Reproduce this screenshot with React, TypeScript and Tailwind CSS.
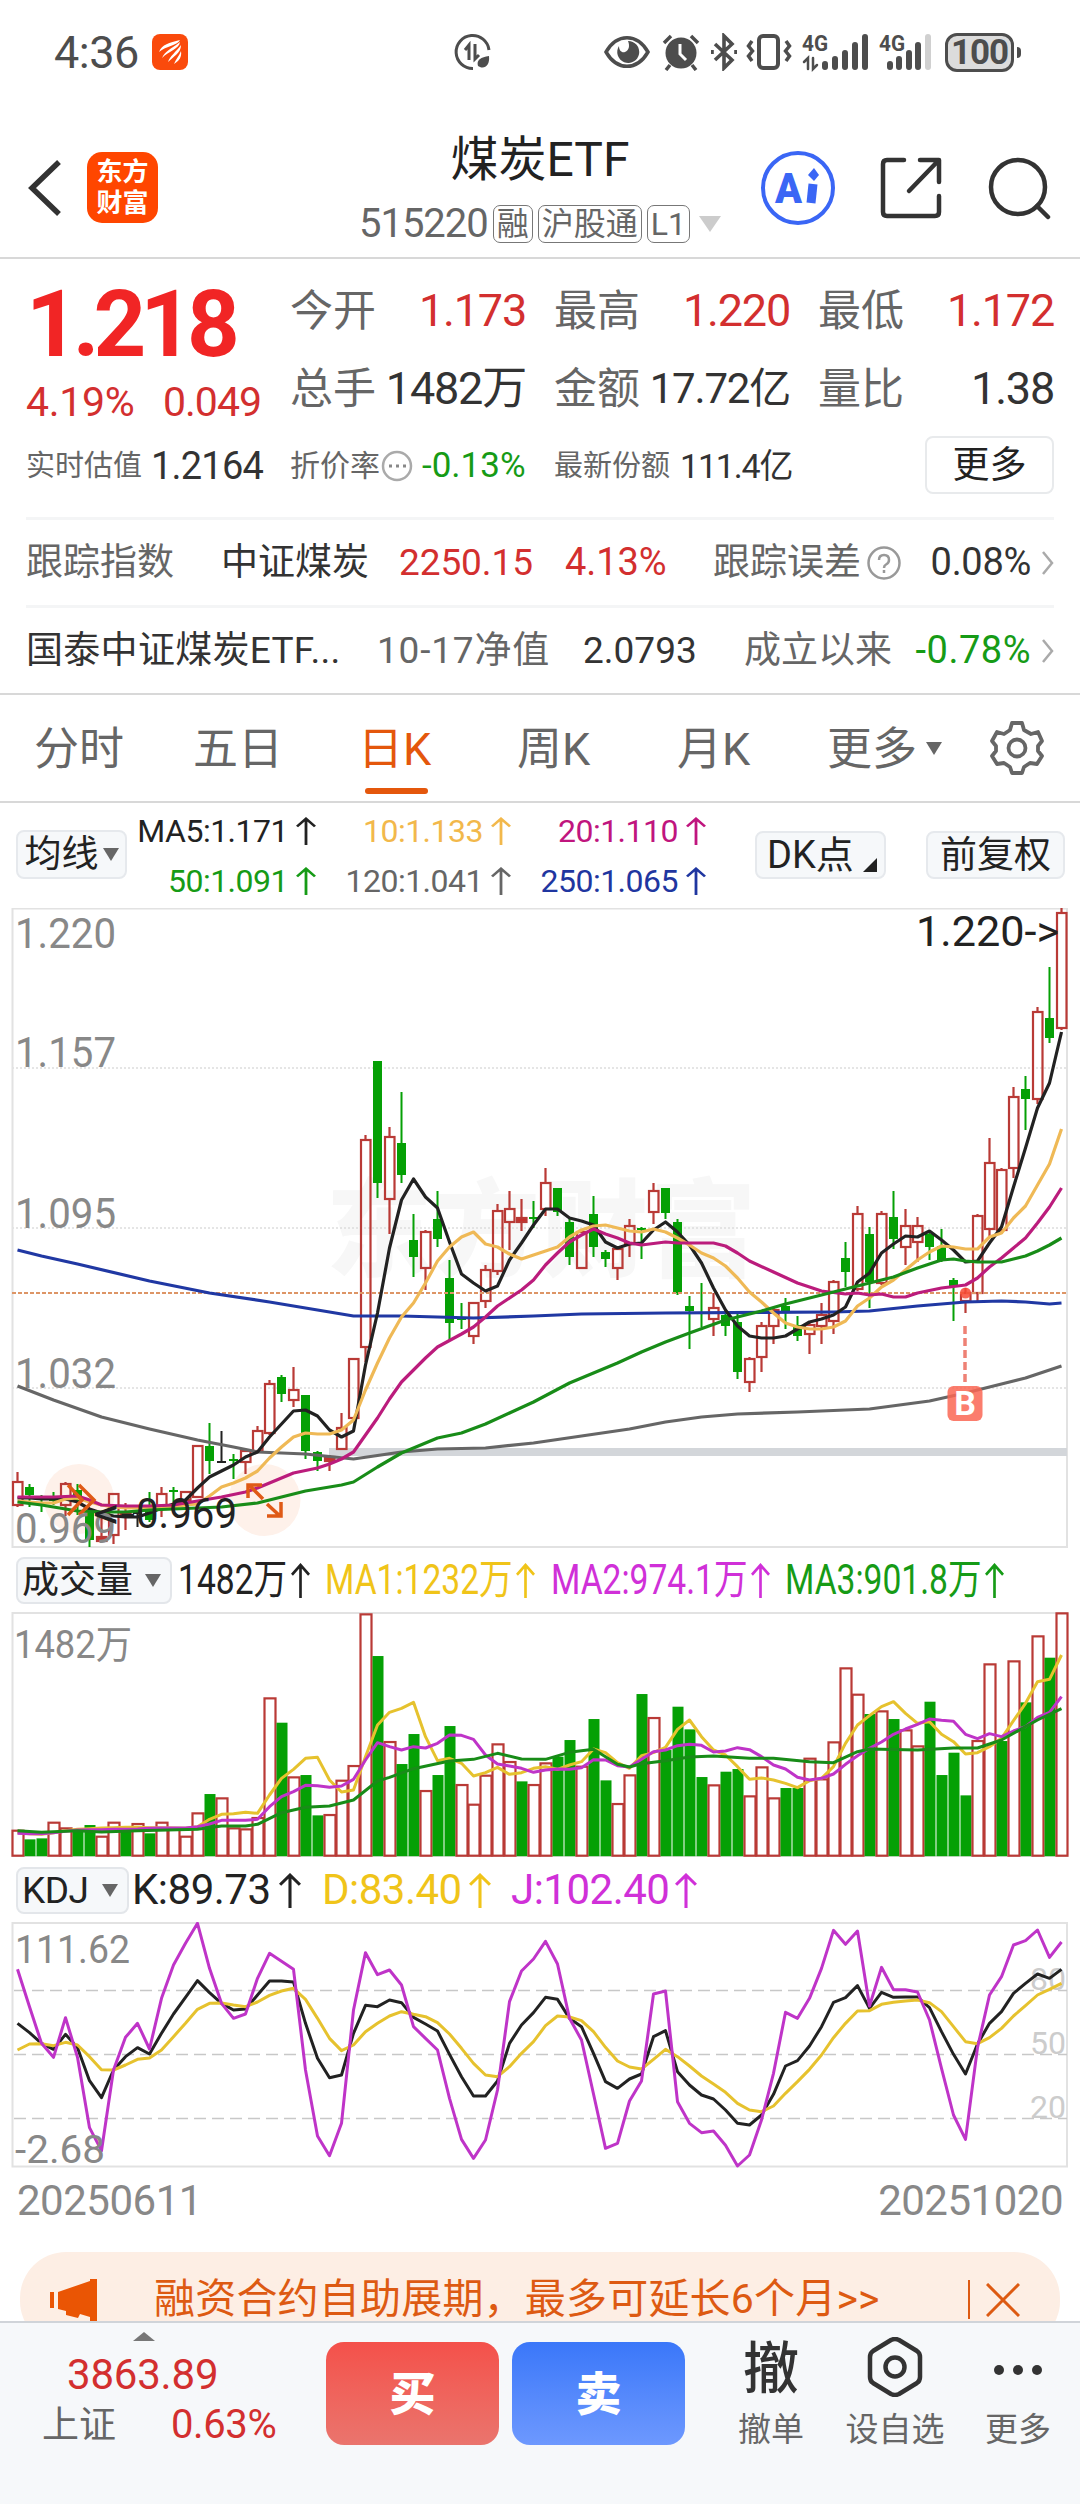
import type { ReactNode } from "react"

type Candle = [kind: "r" | "g" | "k", high: number, top: number, bottom: number, low: number]
type Point = [index: number, y: number]

// one trading day every 12px, starting at 17.5
const dayX = (i: number) => 17.5 + i * 12

const candles: Candle[] = [
  ["r", 1472, 1482, 1505, 1507], ["g", 1484, 1487, 1495, 1507], ["g", 1495, 1502, 1504, 1512], ["g", 1492, 1499, 1501, 1505],
  ["r", 1482, 1484, 1505, 1516], ["g", 1484, 1490, 1502, 1515], ["g", 1510, 1513, 1540, 1547], ["r", 1515, 1537, 1541, 1542],
  ["r", 1493, 1494, 1535, 1544], ["r", 1503, 1513, 1515, 1530], ["k", 1510, 1512, 1514, 1527], ["g", 1492, 1510, 1520, 1522],
  ["r", 1487, 1494, 1507, 1517], ["g", 1487, 1490, 1492, 1502], ["r", 1491, 1492, 1500, 1502], ["r", 1445, 1446, 1497, 1498],
  ["g", 1423, 1446, 1461, 1474], ["k", 1431, 1461, 1462, 1463], ["g", 1454, 1459, 1460, 1479], ["r", 1450, 1451, 1462, 1474],
  ["r", 1426, 1431, 1451, 1452], ["r", 1380, 1384, 1433, 1435], ["g", 1375, 1377, 1394, 1402], ["r", 1367, 1390, 1400, 1407],
  ["g", 1395, 1395, 1451, 1459], ["g", 1451, 1452, 1461, 1471], ["r", 1455, 1457, 1461, 1471], ["r", 1413, 1428, 1449, 1449],
  ["r", 1358, 1359, 1418, 1419], ["r", 1135, 1140, 1347, 1362], ["g", 1061, 1061, 1183, 1198], ["r", 1127, 1137, 1199, 1234],
  ["g", 1092, 1143, 1175, 1183], ["g", 1214, 1240, 1257, 1277], ["r", 1230, 1232, 1268, 1290], ["g", 1191, 1219, 1239, 1247],
  ["g", 1260, 1278, 1323, 1340], ["g", 1303, 1318, 1320, 1329], ["r", 1302, 1303, 1336, 1344], ["r", 1265, 1270, 1301, 1308],
  ["r", 1204, 1211, 1271, 1275], ["r", 1191, 1209, 1222, 1250], ["r", 1199, 1218, 1222, 1231], ["g", 1201, 1217, 1219, 1228],
  ["r", 1168, 1183, 1209, 1216], ["g", 1188, 1188, 1212, 1216], ["g", 1218, 1222, 1257, 1265], ["r", 1230, 1232, 1268, 1269],
  ["g", 1196, 1214, 1247, 1257], ["g", 1250, 1252, 1259, 1267], ["r", 1248, 1249, 1268, 1280], ["r", 1219, 1226, 1243, 1257],
  ["g", 1227, 1228, 1230, 1259], ["r", 1183, 1191, 1212, 1224], ["g", 1188, 1188, 1213, 1219], ["g", 1219, 1222, 1293, 1295],
  ["g", 1296, 1306, 1311, 1349], ["g", 1283, 1312, 1313, 1327], ["r", 1293, 1308, 1319, 1336], ["g", 1312, 1315, 1326, 1336],
  ["g", 1313, 1322, 1372, 1379], ["r", 1357, 1359, 1382, 1392], ["r", 1322, 1326, 1357, 1372], ["r", 1308, 1310, 1326, 1344],
  ["g", 1298, 1306, 1311, 1329], ["g", 1316, 1325, 1336, 1341], ["r", 1323, 1325, 1334, 1354], ["r", 1303, 1315, 1326, 1344],
  ["r", 1280, 1282, 1321, 1334], ["g", 1242, 1258, 1272, 1287], ["r", 1206, 1214, 1289, 1291], ["g", 1227, 1234, 1282, 1308],
  ["r", 1211, 1214, 1283, 1285], ["g", 1191, 1217, 1239, 1249], ["r", 1209, 1226, 1247, 1265], ["r", 1217, 1226, 1242, 1262],
  ["g", 1232, 1234, 1247, 1260], ["g", 1229, 1246, 1261, 1262], ["g", 1278, 1280, 1286, 1321], ["r", 1288, 1293, 1301, 1313],
  ["r", 1214, 1216, 1293, 1301], ["r", 1138, 1163, 1229, 1237], ["r", 1168, 1170, 1230, 1234], ["r", 1087, 1097, 1168, 1178],
  ["g", 1076, 1089, 1099, 1130], ["r", 1007, 1012, 1099, 1104], ["g", 967, 1018, 1038, 1043], ["r", 908, 913, 1028, 1030],
]

const ma5 = [
  1498, 1498, 1499, 1499, 1499, 1502, 1509, 1513, 1516, 1517, 1517, 1513, 1508, 1504, 1500, 1488, 1477, 1471, 1465, 1457, 1452, 1437,
  1424, 1411, 1410, 1416, 1430, 1437, 1431, 1365, 1313, 1248, 1200, 1179, 1197, 1208, 1242, 1274, 1283, 1291, 1286, 1260, 1243, 1225,
  1209, 1209, 1218, 1221, 1225, 1242, 1248, 1244, 1243, 1230, 1222, 1232, 1245, 1263, 1288, 1310, 1326, 1336, 1338, 1338, 1336, 1329,
  1322, 1319, 1315, 1307, 1282, 1273, 1253, 1244, 1236, 1237, 1231, 1240, 1250, 1262, 1261, 1243, 1227, 1187, 1148, 1108, 1083, 1032,
]
const ma10 = [
  1501, 1502, 1503, 1503, 1499, 1498, 1502, 1505, 1507, 1508, 1508, 1508, 1508, 1507, 1505, 1504, 1496, 1487, 1483, 1478, 1471, 1458,
  1447, 1437, 1433, 1434, 1434, 1430, 1420, 1390, 1363, 1338, 1317, 1303, 1283, 1261, 1247, 1237, 1232, 1244, 1247, 1254, 1259, 1255,
  1251, 1247, 1237, 1230, 1226, 1225, 1228, 1231, 1232, 1229, 1232, 1238, 1245, 1253, 1258, 1266, 1278, 1292, 1302, 1313, 1323, 1327,
  1329, 1329, 1327, 1321, 1306, 1298, 1287, 1280, 1270, 1260, 1252, 1246, 1247, 1249, 1249, 1237, 1233, 1218, 1206, 1185, 1164, 1129,
]
const ma20: Point[] = [
  [0, 1497], [3, 1497], [5, 1496], [6, 1500], [7, 1505], [9, 1506], [11, 1506], [13, 1505], [15, 1501], [17, 1497], [19, 1492],
  [20, 1488], [21, 1483], [23, 1473], [25, 1468], [26, 1464], [27, 1459], [28, 1452], [29, 1435], [30, 1418], [31, 1399], [32, 1382],
  [33, 1370], [34, 1358], [35, 1347], [37, 1334], [38, 1327], [39, 1317], [40, 1306], [42, 1290], [43, 1280], [44, 1265], [45, 1253],
  [46, 1242], [47, 1235], [48, 1229], [49, 1234], [50, 1238], [51, 1243], [52, 1245], [54, 1242], [55, 1243], [58, 1243], [59, 1246],
  [60, 1253], [61, 1261], [63, 1272], [65, 1283], [67, 1291], [69, 1294], [70, 1293], [71, 1295], [72, 1294], [73, 1297], [74, 1297],
  [75, 1293], [77, 1288], [79, 1285], [80, 1278], [81, 1267], [82, 1258], [83, 1248], [84, 1238], [85, 1223], [86, 1207], [87, 1188],
]
const ma50: Point[] = [
  [0, 1502], [2, 1505], [4, 1509], [5, 1511], [7, 1512], [9, 1512], [11, 1510], [15, 1508], [17, 1507], [20, 1503], [22, 1497],
  [24, 1491], [27, 1485], [28, 1482], [30, 1467], [32, 1453], [35, 1438], [37, 1433], [39, 1424], [41, 1413], [43, 1402], [46, 1383],
  [48, 1373], [50, 1363], [52, 1352], [54, 1342], [56, 1333], [59, 1320], [62, 1311], [64, 1304], [66, 1298], [69, 1289], [71, 1283],
  [73, 1277], [75, 1268], [77, 1260], [78, 1259], [79, 1261], [80, 1262], [82, 1262], [83, 1259], [84, 1256], [85, 1251], [86, 1245], [87, 1238],
]
const ma120: Point[] = [
  [0, 1386], [3, 1400], [7, 1417], [11, 1429], [15, 1440], [18, 1447], [20, 1452], [24, 1454], [28, 1459], [32, 1452], [35, 1449],
  [39, 1448], [43, 1443], [47, 1436], [51, 1429], [54, 1422], [57, 1417], [60, 1414], [65, 1412], [71, 1409], [76, 1401], [79, 1393],
  [82, 1384], [84, 1378], [87, 1366],
]
const ma250: Point[] = [
  [0, 1250], [2, 1256], [5, 1264], [11, 1281], [16, 1293], [21, 1302], [25, 1310], [28, 1316], [32, 1316], [38, 1318], [43, 1316],
  [47, 1314], [54, 1313], [68, 1312], [71, 1311], [75, 1306], [79, 1302], [82, 1301], [84, 1302], [86, 1304], [87, 1303],
]

// volume and KDJ series are kept at three units per pixel
const volumes = [
  75, 49, 52, 99, 82, 72, 92, 57, 99, 77, 95, 67, 99, 79, 57, 127, 185, 172, 82, 79, 113, 472, 399, 235, 242, 121, 122, 225, 269, 724,
  599, 341, 275, 365, 194, 242, 389, 212, 153, 240, 334, 281, 223, 212, 277, 297, 347, 267, 410, 226, 155, 241, 485, 413, 317, 447, 379,
  236, 211, 252, 260, 178, 265, 172, 203, 203, 291, 229, 340, 562, 483, 425, 433, 410, 376, 328, 462, 242, 309, 181, 344, 574, 344, 583,
  460, 658, 594, 727,
]
const fallingDays = new Set([
  1, 2, 5, 6, 9, 11, 16, 22, 24, 25, 30, 32, 33, 35, 36, 42, 45, 46, 48, 49, 52, 54, 55, 56, 57, 59, 60, 64, 65, 71, 73, 76, 77, 78, 79,
  82, 84, 86,
])
const volMa1 = [
  848, 851, 853, 848, 842, 838, 836, 834, 833, 832, 832, 833, 833, 834, 835, 830, 808, 793, 791, 787, 790, 735, 685, 658, 625, 622, 690,
  726, 720, 620, 525, 487, 475, 457, 560, 632, 625, 640, 678, 668, 652, 673, 668, 655, 650, 658, 645, 635, 597, 608, 638, 655, 617, 608,
  592, 538, 510, 560, 600, 615, 650, 688, 684, 690, 700, 713, 692, 685, 650, 580, 525, 497, 470, 455, 490, 520, 515, 553, 575, 612, 608,
  590, 565, 512, 460, 395, 388, 315,
]
const volMa2 = [
  850, 851, 851, 848, 844, 840, 839, 839, 838, 838, 837, 835, 834, 834, 834, 830, 822, 811, 811, 811, 808, 770, 740, 725, 706, 707, 712,
  708, 688, 630, 578, 590, 600, 590, 594, 580, 555, 556, 568, 615, 642, 648, 655, 667, 660, 657, 658, 653, 629, 630, 647, 651, 628, 605,
  600, 587, 583, 586, 606, 603, 593, 599, 620, 645, 657, 682, 690, 685, 672, 643, 617, 595, 576, 553, 537, 523, 507, 511, 514, 553, 566,
  551, 560, 543, 530, 502, 487, 440,
]
const volMa3: Point[] = [
  [0, 842], [2, 847], [5, 842], [7, 846], [10, 842], [15, 838], [17, 828], [19, 828], [20, 823], [22, 788], [24, 772], [26, 768],
  [28, 750], [30, 693], [31, 682], [33, 656], [36, 633], [38, 628], [40, 610], [42, 627], [44, 628], [46, 607], [48, 598], [50, 643],
  [51, 651], [52, 641], [54, 632], [56, 621], [58, 618], [61, 625], [63, 625], [66, 635], [68, 638], [70, 605], [71, 597], [75, 600],
  [78, 594], [80, 594], [82, 570], [84, 530], [85, 510], [87, 476],
]
const kLine = [
  490, 518, 550, 568, 523, 563, 662, 713, 630, 590, 563, 582, 520, 462, 412, 362, 398, 430, 450, 447, 405, 363, 363, 366, 490, 595, 653,
  645, 520, 436, 440, 420, 428, 472, 492, 513, 583, 650, 708, 708, 663, 550, 495, 458, 412, 418, 475, 500, 580, 665, 685, 657, 642, 530,
  512, 635, 675, 705, 717, 750, 790, 795, 765, 703, 618, 602, 558, 500, 427, 413, 377, 445, 397, 412, 411, 411, 443, 515, 583, 642, 552,
  490, 455, 400, 370, 342, 355, 328,
]
const dLine = [
  570, 552, 551, 557, 547, 555, 590, 629, 630, 615, 598, 594, 570, 530, 490, 448, 430, 429, 435, 440, 426, 406, 393, 385, 418, 475, 535,
  572, 555, 515, 490, 468, 455, 463, 470, 488, 522, 565, 610, 645, 650, 620, 580, 545, 497, 468, 471, 482, 515, 562, 603, 621, 627, 598,
  568, 590, 618, 648, 672, 697, 730, 750, 755, 738, 700, 665, 628, 585, 533, 490, 453, 452, 433, 427, 423, 420, 428, 455, 500, 545, 551,
  533, 505, 468, 437, 405, 388, 370,
]
const jLine = [
  328, 440, 550, 592, 473, 592, 803, 872, 630, 532, 490, 567, 415, 315, 250, 190, 325, 430, 475, 462, 355, 280, 304, 328, 630, 828, 887,
  790, 450, 278, 344, 330, 375, 500, 535, 570, 715, 838, 895, 840, 690, 425, 333, 297, 244, 312, 475, 540, 702, 865, 850, 723, 663, 402,
  393, 725, 790, 818, 813, 856, 918, 885, 780, 640, 457, 475, 415, 325, 211, 253, 213, 438, 322, 389, 389, 396, 480, 625, 765, 838, 563,
  405, 350, 255, 242, 210, 292, 246,
]

function Line({ data, color, scale = 1, width = 3.2 }: { data: (number | Point)[]; color: string; scale?: number; width?: number }) {
  const points = data
    .map((d, i) => (typeof d === "number" ? `${dayX(i)},${d * scale}` : `${dayX(d[0])},${d[1] * scale}`))
    .join(" ")
  return <polyline points={points} fill="none" stroke={color} strokeWidth={width} strokeLinejoin="round" />
}

function ChartText({ x, y, w, size = 42, fill = "#888888", children }: { x: number; y: number; w: number; size?: number; fill?: string; children: string }) {
  return (
    <text x={x} y={y} fontSize={size} fill={fill} textLength={w} lengthAdjust="spacingAndGlyphs">
      {children}
    </text>
  )
}

function UpArrow({ className = "h-[28px] w-[20px]" }: { className?: string }) {
  return (
    <svg viewBox="0 0 20 34" preserveAspectRatio="none" className={className} fill="none" stroke="currentColor" strokeWidth="2.8">
      <path d="M10 34V2M1 11.500 10 2l9 9.500" />
    </svg>
  )
}

function StatusBar() {
  return (
    <div className="flex h-[104px] items-center pl-[54px] text-[#4d4d4d]">
      <span className="w-[98px] text-[45px] leading-none tracking-[-.5px]">4:36</span>
      <svg viewBox="0 0 36 36" className="size-9">
        <rect width="36" height="36" rx="8" fill="#fa4a0c" />
        <path d="M7 18C10 10 17 9 28 6C26 11 14 12 7 18ZM10 24C13 17 19 15 28 8C27 15 17 17 10 24ZM16 28C18 22 24 18 29 11C29 19 22 22 16 28ZM22 30C24 25 27 22 29 17C30 23 27 27 22 30Z" fill="#fff" />
      </svg>
      <svg viewBox="0 0 38 38" className="ml-[266px] size-[38px]" fill="none" stroke="currentColor" strokeWidth="3">
        <path d="M35 17A16.500 16.500 0 1 0 19 35.500M15 27V12l-4 5M21 11v15l4-4" />
        <path d="M24 33C22 27 27 24 35 23C36 32 31 36 26 34Z" fill="currentColor" stroke="none" />
      </svg>
      <svg viewBox="0 0 46 34" className="ml-[112px] h-[34px] w-[46px]" fill="none" stroke="currentColor" strokeWidth="3.500">
        <path d="M2 17C13-2 33-2 44 17C33 36 13 36 2 17Z" />
        <path d="M24 6a11 11 0 1 1-9 5c0 5 3 7 6 6c4-2 5-6 3-11Z" fill="currentColor" stroke="none" />
      </svg>
      <svg viewBox="0 0 38 38" className="ml-3 size-[38px]" fill="none" stroke="currentColor" strokeWidth="3.500">
        <circle cx="19" cy="20" r="15.500" fill="currentColor" stroke="none" />
        <path d="M2 10 9 3M36 10 29 3M8 32l-4 5M30 32l4 5" />
        <path d="M18 11v10l6 6" stroke="#fff" strokeWidth="3" />
      </svg>
      <svg viewBox="0 0 26 38" className="ml-[11px] h-[38px] w-[26px]" fill="none" stroke="currentColor" strokeWidth="3.600">
        <path d="M4 11 21 27 13 35V3l8 8L4 27M1 17v4M25 17v4" />
      </svg>
      <svg viewBox="0 0 46 38" className="ml-[9px] h-[38px] w-[46px]" fill="none" stroke="currentColor" strokeWidth="4">
        <rect x="13" y="3" width="19" height="32" rx="4" />
        <path d="M6 8 2.500 13l4 5-4 5 3.500 5M40 8l3.500 5-4 5 4 5-3.500 5" strokeWidth="3.500" />
      </svg>
      <svg viewBox="0 0 68 38" className="ml-[10px] h-[38px] w-[68px] overflow-visible" fill="none" stroke="currentColor" strokeWidth="6" strokeLinecap="round">
        <text x="0" y="18" fontSize="22" fontWeight="700" textLength="26" lengthAdjust="spacingAndGlyphs" fill="currentColor" stroke="none">4G</text>
        <path d="M23 34v-3M33 34v-8M43 34V20M53 34V12M63 34V4" />
        <path d="M6 36V25l-4 4M11 25v11l4-4" strokeWidth="2.500" />
      </svg>
      <svg viewBox="0 0 54 38" className="ml-[9px] h-[38px] w-[54px] overflow-visible" fill="none" stroke="currentColor" strokeWidth="6" strokeLinecap="round">
        <text x="0" y="18" fontSize="22" fontWeight="700" textLength="26" lengthAdjust="spacingAndGlyphs" fill="currentColor" stroke="none">4G</text>
        <path d="M11 34v-3M20 34v-8M30 34V20M39 34V12" />
        <path d="M49 34V4" stroke="#d0d0d0" />
      </svg>
      <div className="ml-[12px] flex h-[39px] w-[69px] items-center justify-center rounded-xl border-[3px] border-[#4d4d4d] bg-[#dcdcdc] text-[35px] font-bold leading-none tracking-[-1px]">
        100
      </div>
      <div className="ml-[3px] h-[11px] w-[4px] rounded-r bg-[#4d4d4d]" />
    </div>
  )
}

function Badge({ children }: { children: ReactNode }) {
  return (
    <span className="flex h-[38px] items-center rounded-[7px] border-[1.5px] border-[#777777] px-[3px] text-[32px] leading-none text-[#666666]">
      {children}
    </span>
  )
}

function Header() {
  return (
    <div className="flex h-[155px] border-b-2 border-[#d8d8d8]">
      <div className="flex w-[330px] items-center pl-7 pt-[14px]">
        <svg viewBox="0 0 34 56" className="h-[56px] w-[34px]" fill="none" stroke="#333333" strokeWidth="5.500">
          <path d="M31 2 4 28l27 26" />
        </svg>
        <div className="ml-[25px] flex h-[71px] w-[71px] flex-col items-center justify-center rounded-[15px] bg-[#ff4600] text-[26px] font-bold leading-[31px] text-white">
          <span>东方</span>
          <span>财富</span>
        </div>
      </div>
      <div className="flex w-[420px] flex-col items-center pt-[28px]">
        <div className="text-[48px] leading-[56px] text-[#222222]">煤炭ETF</div>
        <div className="mt-[15px] flex h-[42px] items-center gap-[5px] text-[#666666]">
          <span className="text-[40px] leading-none tracking-[-1px]">515220</span>
          <Badge>融</Badge>
          <Badge>沪股通</Badge>
          <Badge>L1</Badge>
          <svg viewBox="0 0 22 16" className="ml-[4px] h-4 w-[22px]"><path d="M0 0h22L11 16Z" fill="#cccccc" /></svg>
        </div>
      </div>
      <div className="flex flex-1 items-center pl-[10px] pt-[14px]">
        <svg viewBox="0 0 76 76" className="size-[76px]" fill="none" stroke="#3a66f5" strokeWidth="4">
          <circle cx="38" cy="38" r="35" />
          <text x="15" y="53" fontSize="42" fontWeight="900" fill="#3a66f5" stroke="none" textLength="27" lengthAdjust="spacingAndGlyphs">A</text>
          <path d="M53 34l-2 19" strokeWidth="9" />
          <path d="M54 18l5 7-5 6-6-6Z" fill="#3a66f5" stroke="none" />
        </svg>
        <svg viewBox="0 0 62 62" className="ml-[44px] size-[62px]" fill="none" stroke="#333333" strokeWidth="4.500" strokeLinecap="round" strokeLinejoin="round">
          <path d="M24 3H7Q3 3 3 7v48q0 4 4 4h48q4 0 4-4V39M40 3h19v22M58 4 29 34" />
        </svg>
        <svg viewBox="0 0 64 64" className="ml-[46px] size-[64px]" fill="none" stroke="#333333" strokeWidth="4.500" strokeLinecap="round">
          <circle cx="30" cy="31" r="27" />
          <path d="M49 50l11 11" />
        </svg>
      </div>
    </div>
  )
}

function Stat({ label, value, color = "text-[#333333]" }: { label: string; value: string; color?: string }) {
  return (
    <div className="flex w-[236px] items-center justify-between whitespace-nowrap">
      <span className="text-[43px] text-[#666666]">{label}</span>
      <span className={`tracking-[-1.2px] ${value.length > 5 ? "text-[42px]" : "text-[45px]"} ${color}`}>{value}</span>
    </div>
  )
}

function Chevron() {
  return (
    <svg viewBox="0 0 12 24" className="ml-[11px] h-6 w-3" fill="none" stroke="#aaaaaa" strokeWidth="2.500">
      <path d="M1 1l9 11-9 11" />
    </svg>
  )
}

function Quote() {
  return (
    <div className="h-[436px] border-b-2 border-[#d8d8d8] px-[26px]">
      <div className="flex h-[171px]">
        <div className="w-[265px] text-[#f12525]">
          <div className="mt-[20px] text-[92px] font-bold leading-[92px] tracking-[-6px]">1.218</div>
          <div className="flex h-[60px] items-center pt-[3px] text-[41px] tracking-[-.3px] text-[#d32f2f]">
            <span className="w-[137px]">4.19%</span>
            <span className="tracking-[-1px]">0.049</span>
          </div>
        </div>
        <div className="grid flex-1 grid-cols-[236px_236px_236px] content-start gap-x-[28px] pt-[13px] leading-[78px]">
          <Stat label="今开" value="1.173" color="text-[#d32f2f]" />
          <Stat label="最高" value="1.220" color="text-[#d32f2f]" />
          <Stat label="最低" value="1.172" color="text-[#d32f2f]" />
          <Stat label="总手" value="1482万" />
          <Stat label="金额" value="17.72亿" />
          <Stat label="量比" value="1.38" />
        </div>
      </div>
      <div className="flex h-[87px] items-start whitespace-nowrap text-[29px] leading-[72px] text-[#666666]">
        <div className="flex w-[264px]">
          <span className="w-[125px]">实时估值</span>
          <span className="text-[38px] tracking-[-.8px] text-[#333333]">1.2164</span>
        </div>
        <div className="flex w-[264px] items-center">
          <span className="text-[30px]">折价率</span>
          <svg viewBox="0 0 32 32" className="ml-px size-8" fill="none" stroke="#aaaaaa" strokeWidth="2.500">
            <circle cx="16" cy="16" r="14" />
            <path d="M8 16h3M15 16h3M22 16h3" stroke="#888888" strokeWidth="3" />
          </svg>
          <span className="ml-[9px] text-[35px] text-[#169b16]">-0.13%</span>
        </div>
        <div className="flex flex-1 items-center">
          <span>最新份额</span>
          <span className="ml-[10px] text-[34px] tracking-[-1.2px] text-[#333333]">111.4亿</span>
        </div>
        <div className="mt-[6px] flex h-[58px] w-[129px] items-center justify-center rounded-lg border-2 border-[#e8eaec] text-[37px] leading-none text-[#222222]">
          更多
        </div>
      </div>
      <div className="flex h-[88px] items-center whitespace-nowrap border-t-[3px] border-[#f4f5f6] text-[37px] text-[#333333]">
        <span className="w-[195px] text-[#666666]">跟踪指数</span>
        <span className="w-[178px]">中证煤炭</span>
        <span className="w-[166px] tracking-[-.1px] text-[#d32f2f]">2250.15</span>
        <span className="w-[148px] text-[38px] tracking-[-.1px] text-[#d32f2f]">4.13%</span>
        <span className="text-[#666666]">跟踪误差</span>
        <svg viewBox="0 0 36 36" className="ml-[5px] size-9" fill="none" stroke="#999999" strokeWidth="2.500">
          <circle cx="18" cy="18" r="15.500" />
          <path d="M13 15q0-5 5-5t5 5q0 3-3 4.500-2 1-2 3.500M18 25v3" />
        </svg>
        <span className="ml-auto text-[38px] tracking-[-.3px]">0.08%</span>
        <Chevron />
      </div>
      <div className="flex h-[88px] items-center whitespace-nowrap border-t-[3px] border-[#f4f5f6] text-[37px] text-[#333333]">
        <span className="w-[351px] tracking-[.3px]">国泰中证煤炭ETF...</span>
        <span className="w-[206px] tracking-[.8px] text-[#666666]">10-17净值</span>
        <span className="w-[161px]">2.0793</span>
        <span className="text-[#666666]">成立以来</span>
        <span className="ml-auto text-[38px] tracking-[.5px] text-[#169b16]">-0.78%</span>
        <Chevron />
      </div>
    </div>
  )
}

function Tabs() {
  return (
    <div className="flex h-[108px] items-start whitespace-nowrap border-b-2 border-[#d8d8d8] pl-[34px] text-[45px] leading-[110px] text-[#666666]">
      <span className="w-[159px]">分时</span>
      <span className="w-[165px]">五日</span>
      <div className="w-[159px] text-[#e4570c]">
        <div className="h-[93px]">日K</div>
        <div className="ml-[7px] h-[6px] w-[63px] rounded-full bg-[#e4570c]" />
      </div>
      <span className="w-[160px]">周K</span>
      <span className="w-[150px]">月K</span>
      <span>更多</span>
      <svg viewBox="0 0 16 13" className="ml-[9px] mt-[47px] h-[13px] w-4"><path d="M0 0h16L8 13Z" fill="#666666" /></svg>
      <svg viewBox="0 0 54 54" className="ml-[48px] mt-[26px] size-[54px]" fill="none" stroke="#666666" strokeWidth="3.800" strokeLinejoin="round">
        <path d="M22 2h10l2 7 7 4 7-2 4 9-4 5v5l4 5-5 8-7-1-6 4-2 6H22l-2-6-6-4-7 1-5-8 4-5v-5l-4-5 5-9 7 2 6-4Z" />
        <circle cx="27" cy="27" r="8.500" />
      </svg>
    </div>
  )
}

function MaValue({ text, color }: { text: string; color: string }) {
  return (
    <div className={`flex w-[195px] items-center justify-end gap-[8px] ${color}`}>
      <span>{text}</span>
      <UpArrow />
    </div>
  )
}

function MaLegend() {
  return (
    <div className="flex h-[105px] whitespace-nowrap text-[#222222]">
      <div className="ml-4 mt-[27px] flex h-[49px] w-[111px] items-center justify-center gap-[4px] rounded-lg border-2 border-[#e6e9ed] bg-[#f6f8fa] text-[37px] leading-none">
        均线
        <svg viewBox="0 0 16 13" className="h-[13px] w-4"><path d="M0 0h16L8 13Z" fill="#666666" /></svg>
      </div>
      <div className="-ml-[6px] grid w-[585px] grid-cols-3 content-start pt-[3px] text-[32px] leading-[50px] tracking-[-.5px]">
        <MaValue text="MA5:1.171" color="text-[#222222]" />
        <MaValue text="10:1.133" color="text-[#f2b84b]" />
        <MaValue text="20:1.110" color="text-[#c0157e]" />
        <MaValue text="50:1.091" color="text-[#169b16]" />
        <MaValue text="120:1.041" color="text-[#666666]" />
        <MaValue text="250:1.065" color="text-[#1f36a0]" />
      </div>
      <div className="ml-[49px] mt-[28px] flex h-[48px] w-[131px] items-center rounded-lg border-2 border-[#e6e9ed] bg-[#f6f8fa] pl-[10px] text-[38px] leading-none">
        DK点
        <svg viewBox="0 0 14 14" className="ml-[9px] mt-5 size-[14px]"><path d="M14 0v14H0Z" fill="#222222" /></svg>
      </div>
      <div className="ml-[40px] mt-[28px] flex h-[48px] w-[139px] items-center justify-center rounded-lg border-2 border-[#e6e9ed] bg-[#f6f8fa] text-[37px] leading-none">
        前复权
      </div>
    </div>
  )
}

function CandleShape({ candle, x }: { candle: Candle; x: number }) {
  const [kind, high, top, bottom, low] = candle
  if (kind === "r") {
    return (
      <g stroke="#b93a36" strokeWidth="2.200" fill={bottom - top < 5 ? "#c9302c" : "none"}>
        <path d={`M${x} ${high}V${top}M${x} ${bottom}V${low}`} />
        <rect x={x - 4.5} y={top} width="9.500" height={bottom - top} />
      </g>
    )
  }
  const color = kind === "g" ? "#05a005" : "#222222"
  return (
    <g fill={color}>
      <rect x={x - 1} y={high} width="2" height={low - high} />
      <rect x={x - 4.500} y={top} width="9" height={Math.max(bottom - top, 2)} />
    </g>
  )
}

function PriceChart() {
  return (
    <svg viewBox="0 908 1080 640" className="block h-[640px] w-full">
      <text x="326" y="1268" fontSize="106" fontWeight="900" fill="#f7f7f7" textLength="430">东方财富</text>
      <path d="M12 1068H1067M12 1228H1067M12 1388H1067" stroke="#dddddd" strokeWidth="1.500" strokeDasharray="2 2" />
      <rect x="12.500" y="908.500" width="1054.500" height="638.500" fill="none" stroke="#e2e2e2" strokeWidth="2" />
      <circle cx="79" cy="1499" r="35" fill="#fef1ea" />
      <circle cx="264.500" cy="1500" r="36" fill="#fef1ea" />
      <rect x="329" y="1448" width="738" height="8" fill="#d3d6da" />
      <ChartText x={15} y={948} w={101}>1.220</ChartText>
      <ChartText x={15} y={1067} w={101}>1.157</ChartText>
      <ChartText x={15} y={1228} w={101}>1.095</ChartText>
      <ChartText x={15} y={1388} w={101}>1.032</ChartText>
      {candles.map((c, i) => (
        <CandleShape key={i} candle={c} x={dayX(i)} />
      ))}
      <path d="M12 1293H1067" stroke="#dd9566" strokeWidth="2" strokeDasharray="4 2" />
      <Line data={ma120} color="#666666" />
      <Line data={ma250} color="#2038a3" />
      <Line data={ma5} color="#222222" />
      <Line data={ma10} color="#efb956" />
      <Line data={ma20} color="#bb1c7c" />
      <Line data={ma50} color="#188c18" />
      <path d="M68 1485l14 15-14 15M79 1485l15 15-15 15M263 1499l-14-14M248 1498v-13h14M267 1504l13 12M267 1516h14v-14" fill="none" stroke="#df5a16" strokeWidth="3.500" />
      <ChartText x={15} y={1543} w={101}>0.969</ChartText>
      <ChartText x={93} y={1528} w={42} fill="#222222">&lt;-</ChartText>
      <ChartText x={136} y={1528} w={101} fill="#222222">0.969</ChartText>
      <ChartText x={916} y={946} w={143} fill="#222222">1.220-&gt;</ChartText>
      <circle cx="965.500" cy="1293" r="5.500" fill="#f84a35" opacity=".85" />
      <path d="M965 1326v59" stroke="#ee8175" strokeWidth="3.500" strokeDasharray="8 4" />
      <rect x="947.500" y="1386" width="35" height="35" rx="6" fill="#fa6653" opacity=".85" />
      <text x="965" y="1415" textAnchor="middle" fontSize="34" fontWeight="700" fill="#ffffff">B</text>
    </svg>
  )
}

function Pill({ width, children }: { width: string; children: string }) {
  return (
    <div className={`ml-[16px] flex h-[47px] items-center justify-between rounded-lg border-2 border-[#e3e6ea] bg-[#f6f8fa] pl-[4px] pr-[9px] text-[37px] leading-none ${width}`}>
      {children}
      <svg viewBox="0 0 16 13" className="h-[13px] w-4"><path d="M0 0h16L8 13Z" fill="#666666" /></svg>
    </div>
  )
}

function VolumeChart() {
  return (
    <>
      <div className="flex h-[64px] items-center whitespace-nowrap text-[42px] leading-none text-[#222222]">
        <Pill width="w-[156px]">成交量</Pill>
        <div className="ml-[6px] flex w-[147px] items-center">
          <span className="w-[113px] origin-left scale-x-[.8]">1482万</span>
          <UpArrow className="h-[35px] w-[19px]" />
        </div>
        <div className="flex w-[226px] items-center text-[#f0c419]">
          <span className="w-[191px] origin-left scale-x-[.8]">MA1:1232万</span>
          <UpArrow className="h-[35px] w-[19px]" />
        </div>
        <div className="flex w-[234px] items-center text-[#d030d8]">
          <span className="w-[200px] origin-left scale-x-[.8]">MA2:974.1万</span>
          <UpArrow className="h-[35px] w-[19px]" />
        </div>
        <div className="flex items-center text-[#169b16]">
          <span className="w-[200px] origin-left scale-x-[.8]">MA3:901.8万</span>
          <UpArrow className="h-[35px] w-[19px]" />
        </div>
      </div>
      <svg viewBox="0 62 1080 246" className="block h-[246px] w-full">
        <rect x="12.500" y="63" width="1054.500" height="243" fill="none" stroke="#e2e2e2" strokeWidth="2" />
        {volumes.map((v, i) =>
          fallingDays.has(i) ? (
            <rect key={i} x={dayX(i) - 5} y={305.7 - v / 3} width="11" height={v / 3 + 0.5} fill="#05a005" />
          ) : (
            <rect key={i} x={dayX(i) - 5} y={305.7 - v / 3} width="11" height={v / 3} fill="#ffffff" stroke="#b93a36" strokeWidth="2.200" />
          ),
        )}
        <ChartText x={14} y={108} w={118} size={39}>1482万</ChartText>
        <Line data={volMa1} color="#e6c22e" scale={1 / 3} width={3} />
        <Line data={volMa2} color="#bf34c8" scale={1 / 3} width={3} />
        <Line data={volMa3} color="#188c18" scale={1 / 3} width={3} />
      </svg>
    </>
  )
}

function KdjChart() {
  return (
    <>
      <div className="flex h-[64px] items-center whitespace-nowrap text-[42px] leading-none tracking-[-.5px] text-[#222222]">
        <Pill width="w-[113px]">KDJ</Pill>
        <div className="ml-[3px] flex w-[190px] items-center">
          <span className="w-[147px]">K:89.73</span>
          <UpArrow className="h-[35px] w-[22px]" />
        </div>
        <div className="flex w-[189px] items-center text-[#f0c419]">
          <span className="w-[147px]">D:83.40</span>
          <UpArrow className="h-[35px] w-[22px]" />
        </div>
        <div className="flex items-center text-[#d030d8]">
          <span className="w-[164px]">J:102.40</span>
          <UpArrow className="h-[35px] w-[22px]" />
        </div>
      </div>
      <svg viewBox="0 62 1080 246" className="block h-[246px] w-full">
        <rect x="12.500" y="63" width="1054.500" height="243.500" fill="none" stroke="#e2e2e2" strokeWidth="2" />
        <path d="M14 130.500H1067M14 194.500H1067M14 258.500H1067" stroke="#c8c8c8" strokeWidth="1.500" strokeDasharray="12 6" />
        <ChartText x={1030} y={130} w={36} size={32} fill="#cccccc">80</ChartText>
        <ChartText x={1030} y={194} w={36} size={32} fill="#cccccc">50</ChartText>
        <ChartText x={1030} y={258} w={36} size={32} fill="#cccccc">20</ChartText>
        <Line data={kLine} color="#222222" scale={1 / 3} width={3} />
        <Line data={dLine} color="#e6c22e" scale={1 / 3} width={3} />
        <Line data={jLine} color="#bf34c8" scale={1 / 3} width={3} />
        <ChartText x={15} y={103} w={115} size={39}>111.62</ChartText>
        <ChartText x={15} y={303} w={90} size={39}>-2.68</ChartText>
      </svg>
      <div className="flex h-[84px] justify-between px-[17px] pt-[9px] text-[42px] leading-[48px] tracking-[-.5px] text-[#888888]">
        <span>20250611</span>
        <span>20251020</span>
      </div>
    </>
  )
}

function Notice() {
  return (
    <div className="h-[69px] overflow-hidden px-5">
      <div className="flex h-[95px] items-center whitespace-nowrap rounded-[46px] bg-[#fdeee4] pl-[30px] text-[#dd5a12]">
        <svg viewBox="0 0 48 42" className="size-12" fill="#ea5504">
          <path d="M0 13h4v16H0ZM8 13 40 2V0h7v42h-7v-4l-10-3-2 4-12-3v-4l-8-2Z" />
        </svg>
        <span className="ml-[56px] w-[814px] text-[41px] leading-none tracking-[.2px]">融资合约自助展期，最多可延长6个月&gt;&gt;</span>
        <div className="h-[39px] w-[2px] bg-[#dd5a12]" />
        <svg viewBox="0 0 34 34" className="ml-4 size-[34px]" fill="none" stroke="currentColor" strokeWidth="3">
          <path d="M1 1l32 32M33 1 1 33" />
        </svg>
      </div>
    </div>
  )
}

function BottomBar() {
  return (
    <div className="flex h-[183px] whitespace-nowrap border-t-2 border-[#d0d4d9] bg-[#f6f8fa] leading-none text-[#666666]">
      <div className="flex w-[326px] flex-col pt-[9px]">
        <svg viewBox="0 0 22 9" className="ml-[133px] h-[9px] w-[22px]"><path d="M0 9 11 0l11 9Z" fill="#777777" /></svg>
        <span className="ml-[67px] mt-[13px] text-[42px] tracking-[-.2px] text-[#d32f2f]">3863.89</span>
        <div className="mt-[9px] flex items-center text-[37px]">
          <span className="ml-[42px] w-[129px]">上证</span>
          <span className="text-[40px] tracking-[-.4px] text-[#d32f2f]">0.63%</span>
        </div>
      </div>
      <div className="mt-[19px] flex h-[103px] w-[173px] items-center justify-center rounded-[18px] bg-gradient-to-b from-[#f4504a] to-[#ea746d] text-[46px] font-black text-white">
        买
      </div>
      <div className="ml-[13px] mt-[19px] flex h-[103px] w-[173px] items-center justify-center rounded-[18px] bg-gradient-to-b from-[#3a77f9] to-[#6d98fe] text-[46px] font-black text-white">
        卖
      </div>
      <div className="ml-[34px] flex w-[104px] flex-col items-center">
        <span className="mt-[18px] h-[72px] text-[56px] font-medium text-[#333333]">撤</span>
        <span className="text-[33px]">撤单</span>
      </div>
      <div className="ml-[20px] flex w-[104px] flex-col items-center">
        <svg viewBox="0 0 56 60" className="mb-[16px] mt-[14px] h-[60px] w-[56px]" fill="none" stroke="#333333" strokeWidth="4.500" strokeLinejoin="round">
          <path d="M24 3q4-2 8 0l18 11q3 2 3 6v20q0 4-3 6L32 57q-4 2-8 0L6 46q-3-2-3-6V20q0-4 3-6Z" />
          <circle cx="28" cy="30" r="9.500" />
        </svg>
        <span className="text-[33px]">设自选</span>
      </div>
      <div className="ml-[24px] flex w-[94px] flex-col items-center">
        <div className="flex h-[90px] items-center gap-[9px] pt-[4px]">
          <i className="size-[10px] rounded-full bg-[#333333]" />
          <i className="size-[10px] rounded-full bg-[#333333]" />
          <i className="size-[10px] rounded-full bg-[#333333]" />
        </div>
        <span className="text-[33px]">更多</span>
      </div>
    </div>
  )
}

export default function App() {
  return (
    <div className="h-[2504px] w-[1080px] overflow-hidden bg-white font-['Roboto','Noto_Sans_CJK_SC',sans-serif]">
      <StatusBar />
      <Header />
      <Quote />
      <Tabs />
      <MaLegend />
      <PriceChart />
      <VolumeChart />
      <KdjChart />
      <Notice />
      <BottomBar />
    </div>
  )
}
